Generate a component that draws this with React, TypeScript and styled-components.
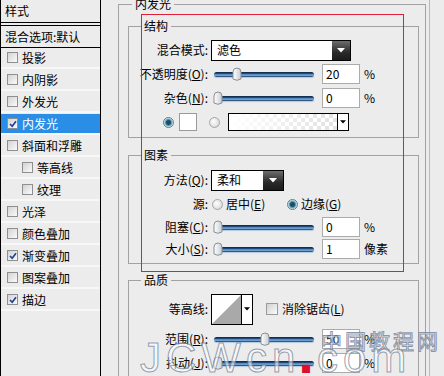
import React from "react";
import styled, { createGlobalStyle } from "styled-components";

const GlobalStyle = createGlobalStyle`
  html, body {
    margin: 0;
    padding: 0;
    background: #ececec;
  }
  body {
    font-family: "Noto Sans CJK SC", "Liberation Sans", sans-serif;
    font-size: 12px;
    line-height: 16px;
    color: #000;
  }
`;

const Window = styled.div`
  position: relative;
  display: flex;
  width: 444px;
  height: 376px;
  overflow: hidden;
  background: #ececec;
`;

/* ---------- left style list ---------- */

const StyleList = styled.div`
  width: 101px;
  flex: none;
  box-sizing: border-box;
  border-left: 1px solid #000;
  border-right: 1px solid #000;
  display: flex;
  flex-direction: column;
`;

const ListHeader = styled.div`
  height: 22px;
  border-bottom: 1px solid #000;
  padding-left: 4px;
  display: flex;
  align-items: center;
`;

const BlendRow = styled.div`
  margin-top: 2px;
  height: 21px;
  border-top: 1px solid #000;
  border-bottom: 1px solid #000;
  padding-left: 4px;
  display: flex;
  align-items: center;
  white-space: nowrap;
`;

const ListItem = styled.div<{ $active?: boolean; $indent?: boolean }>`
  height: 19px;
  margin-bottom: 3px;
  display: flex;
  align-items: center;
  gap: 4px;
  padding-left: ${(p) => (p.$indent ? 21 : 6)}px;
  background: ${(p) => (p.$active ? "#2a8ee6" : "transparent")};
  color: ${(p) => (p.$active ? "#fff" : "#000")};
  box-shadow: 0 2px 0 #f7f7f7;
  white-space: nowrap;
`;

const Check = styled.span`
  width: 9px;
  height: 9px;
  flex: none;
  border: 1px solid #8f8f8f;
  background: linear-gradient(135deg, #d2d2d2, #fbfbfb);
  display: inline-flex;
  align-items: center;
  justify-content: center;
`;

const BigCheck = styled(Check)`
  width: 10px;
  height: 10px;
  margin-left: 13px;
  border-color: #9a9a9a;
`;

const CheckMark = () => (
  <svg width="8" height="8" viewBox="0 0 8 8">
    <path d="M1 4 L3.2 6.3 L7 1.2" stroke="#22409a" strokeWidth="1.7" fill="none" />
  </svg>
);

/* ---------- main panel ---------- */

const Main = styled.div`
  width: 329px;
  flex: none;
  box-sizing: border-box;
  padding-left: 17px;
  border-right: 1px solid #b9b9b9;
`;

const OuterGroup = styled.fieldset`
  margin: -4px 0 0 0;
  width: 308px;
  box-sizing: border-box;
  padding: 3px 6px 0 9px;
  border: 1px solid #a2a2a2;
  border-bottom: none;
  min-width: 0;
`;

const Group = styled.fieldset<{ $mt: number; $pt: number; $pb: number }>`
  margin: ${(p) => p.$mt}px 0 0 0;
  padding: ${(p) => p.$pt}px 0 ${(p) => p.$pb}px 0;
  border: 1px solid #a2a2a2;
  min-width: 0;
`;

const Legend = styled.legend<{ $offset: number }>`
  padding: 0 3px;
  margin-left: ${(p) => p.$offset}px;
  height: 16px;
  line-height: 16px;
`;

const Row = styled.div<{ $h: number; $pl?: number }>`
  height: ${(p) => p.$h}px;
  padding-left: ${(p) => p.$pl ?? 0}px;
  display: flex;
  align-items: center;
  white-space: nowrap;
`;

const FieldLabel = styled.span`
  width: 79px;
  flex: none;
  display: flex;
  justify-content: flex-end;
  white-space: nowrap;
`;

const Select = styled.div<{ $w: number }>`
  margin-left: 3px;
  width: ${(p) => p.$w}px;
  height: 21px;
  flex: none;
  box-sizing: border-box;
  border: 1px solid #000;
  background: #fff;
  display: flex;
  align-items: stretch;
`;

const SelectValue = styled.span`
  flex: 1;
  padding-left: 5px;
  display: flex;
  align-items: center;
`;

const DropButton = styled.span<{ $w: number }>`
  width: ${(p) => p.$w}px;
  flex: none;
  background: linear-gradient(#6d6d6d, #2a2a2a 60%, #1c1c1c);
  display: flex;
  align-items: center;
  justify-content: center;
`;

const SliderBox = styled.div`
  position: relative;
  margin-left: 6px;
  width: 100px;
  height: 14px;
  flex: none;
`;

const Track = styled.div`
  position: absolute;
  left: 0;
  right: 0;
  top: 5px;
  height: 5px;
  border-radius: 3px;
  background: linear-gradient(#0d2140 0%, #24568f 40%, #8cc1ee 60%, #16355f 100%);
  box-shadow: 0 1px 1px rgba(120, 170, 220, 0.5);
`;

const ThumbSvg = styled.svg`
  position: absolute;
  top: 0;
`;

const NumberBox = styled.div`
  margin-left: 8px;
  width: 38px;
  height: 20px;
  flex: none;
  box-sizing: border-box;
  border: 1px solid #ababab;
  background: #fff;
  padding-left: 3px;
  display: flex;
  align-items: center;
`;

const Unit = styled.span`
  margin-left: 4px;
`;

const Radio = styled.span<{ $on?: boolean; $ml?: number }>`
  width: 11px;
  height: 11px;
  flex: none;
  margin-left: ${(p) => p.$ml ?? 0}px;
  border-radius: 50%;
  box-sizing: border-box;
  border: 1px solid ${(p) => (p.$on ? "#5a7f92" : "#a6a6a6")};
  background: ${(p) =>
    p.$on
      ? "radial-gradient(circle, #1f4d63 0 2px, #4f9ab5 3px, #d6e9f0 4.5px)"
      : "radial-gradient(circle at 40% 40%, #ffffff, #cfcfcf)"};
`;

const RadioOption = styled.span<{ $w: number; $ml?: number }>`
  width: ${(p) => p.$w}px;
  margin-left: ${(p) => p.$ml ?? 0}px;
  flex: none;
  display: flex;
  align-items: center;
  gap: 3px;
`;

const Swatch = styled.span`
  margin-left: 5px;
  width: 18px;
  height: 18px;
  flex: none;
  box-sizing: border-box;
  border: 1px solid #9a9a9a;
  background: #fff;
`;

const GradientPicker = styled.div`
  margin-left: 8px;
  width: 121px;
  height: 18px;
  flex: none;
  box-sizing: border-box;
  border: 1px solid #000;
  display: flex;
`;

const GradientFill = styled.span`
  flex: 1;
  background: linear-gradient(to right, #fff 0%, rgba(255, 255, 255, 0) 90%),
    conic-gradient(#e4e4e4 25%, #fff 0 50%, #e4e4e4 0 75%, #fff 0) 0 0 / 8px 8px;
`;

const SmallArrow = styled.span`
  width: 10px;
  flex: none;
  border-left: 1px solid #000;
  background: #fff;
  display: flex;
  align-items: center;
  justify-content: center;
`;

const ContourBox = styled.div`
  margin-left: 3px;
  width: 42px;
  height: 31px;
  flex: none;
  box-sizing: border-box;
  border: 1px solid #000;
  display: flex;
  background: #fff;
`;

const ContourPreview = styled.svg`
  flex: none;
`;

const CheckText = styled.span`
  margin-left: 4px;
`;

/* ---------- overlays ---------- */

const Annotation = styled.div`
  position: absolute;
  z-index: 2;
  left: 141px;
  top: 14px;
  width: 261px;
  height: 256px;
  border: 1px solid #e0203a;
  pointer-events: none;
`;

const WatermarkCn = styled.div`
  position: absolute;
  z-index: 3;
  left: 321px;
  top: 329px;
  font-size: 21px;
  line-height: 22px;
  letter-spacing: 3px;
  color: rgba(255, 255, 255, 0.6);
  -webkit-text-stroke: 1px rgba(105, 120, 145, 0.75);
`;

const WatermarkEn = styled.div`
  position: absolute;
  z-index: 3;
  left: 140px;
  top: 335px;
  font-family: "Liberation Sans", sans-serif;
  font-size: 42px;
  line-height: 46px;
  letter-spacing: 5px;
  color: rgba(255, 255, 255, 0.55);
  -webkit-text-stroke: 1px rgba(105, 120, 145, 0.7);
  > b {
    color: #e0102a;
    -webkit-text-stroke: 2px #e0102a;
  }
`;

const DownTriangle = ({ color, w = 8 }: { color: string; w?: number }) => (
  <svg width={w} height={w / 2 + 1} viewBox="0 0 8 5">
    <polygon points="0,0 8,0 4,4.5" fill={color} />
  </svg>
);

const Slider = ({ value }: { value: number }) => (
  <SliderBox>
    <Track />
    <ThumbSvg
      width="10"
      height="14"
      viewBox="0 0 10 14"
      style={{ left: -1 + value * 0.93 }}
    >
      <defs>
        <linearGradient id="th" x1="0" x2="1">
          <stop offset="0" stopColor="#ffffff" />
          <stop offset="1" stopColor="#c9cdd2" />
        </linearGradient>
      </defs>
      <path
        d="M1 5 Q1 1 5 1 Q9 1 9 5 L9 12 L5 13.3 L1 12 Z"
        fill="url(#th)"
        stroke="#8a8f96"
        strokeWidth="1"
      />
    </ThumbSvg>
  </SliderBox>
);

const items = [
  { label: "投影" },
  { label: "内阴影" },
  { label: "外发光" },
  { label: "内发光", checked: true, active: true },
  { label: "斜面和浮雕" },
  { label: "等高线", indent: true },
  { label: "纹理", indent: true },
  { label: "光泽" },
  { label: "颜色叠加" },
  { label: "渐变叠加", checked: true },
  { label: "图案叠加" },
  { label: "描边", checked: true },
];

export default function App() {
  return (
    <>
      <GlobalStyle />
      <Window>
        <StyleList>
          <ListHeader>样式</ListHeader>
          <BlendRow>混合选项:默认</BlendRow>
          {items.map((it) => (
            <ListItem key={it.label} $active={it.active} $indent={it.indent}>
              <Check>{it.checked && <CheckMark />}</Check>
              {it.label}
            </ListItem>
          ))}
        </StyleList>

        <Main>
          <OuterGroup>
            <Legend $offset={4}>内发光</Legend>

            <Group $mt={3} $pt={4} $pb={3}>
              <Legend $offset={12}>结构</Legend>
              <Row $h={24}>
                <FieldLabel>混合模式:</FieldLabel>
                <Select $w={140}>
                  <SelectValue>滤色</SelectValue>
                  <DropButton $w={18}>
                    <DownTriangle color="#fff" />
                  </DropButton>
                </Select>
              </Row>
              <Row $h={24}>
                <FieldLabel>
                  不透明度(<u>O</u>):
                </FieldLabel>
                <Slider value={20} />
                <NumberBox>20</NumberBox>
                <Unit>%</Unit>
              </Row>
              <Row $h={24}>
                <FieldLabel>
                  杂色(<u>N</u>):
                </FieldLabel>
                <Slider value={0} />
                <NumberBox>0</NumberBox>
                <Unit>%</Unit>
              </Row>
              <Row $h={24} $pl={34}>
                <Radio $on />
                <Swatch />
                <Radio $ml={12} />
                <GradientPicker>
                  <GradientFill />
                  <SmallArrow>
                    <DownTriangle color="#000" w={6} />
                  </SmallArrow>
                </GradientPicker>
              </Row>
            </Group>

            <Group $mt={9} $pt={5} $pb={3}>
              <Legend $offset={12}>图素</Legend>
              <Row $h={24}>
                <FieldLabel>
                  方法(<u>Q</u>):
                </FieldLabel>
                <Select $w={73}>
                  <SelectValue>柔和</SelectValue>
                  <DropButton $w={20}>
                    <DownTriangle color="#fff" />
                  </DropButton>
                </Select>
              </Row>
              <Row $h={24}>
                <FieldLabel>源:</FieldLabel>
                <RadioOption $w={75} $ml={4}>
                  <Radio />
                  <span>
                    居中(<u>E</u>)
                  </span>
                </RadioOption>
                <RadioOption $w={60}>
                  <Radio $on />
                  <span>
                    边缘(<u>G</u>)
                  </span>
                </RadioOption>
              </Row>
              <Row $h={22}>
                <FieldLabel>
                  阻塞(<u>C</u>):
                </FieldLabel>
                <Slider value={0} />
                <NumberBox>0</NumberBox>
                <Unit>%</Unit>
              </Row>
              <Row $h={22}>
                <FieldLabel>
                  大小(<u>S</u>):
                </FieldLabel>
                <Slider value={0} />
                <NumberBox>1</NumberBox>
                <Unit>像素</Unit>
              </Row>
            </Group>

            <Group $mt={8} $pt={3} $pb={20}>
              <Legend $offset={12}>品质</Legend>
              <Row $h={36}>
                <FieldLabel>等高线:</FieldLabel>
                <ContourBox>
                  <ContourPreview width="29" height="29" viewBox="0 0 29 29">
                    <polygon points="0,29 29,0 29,29" fill="#a9a9a9" />
                  </ContourPreview>
                  <SmallArrow>
                    <DownTriangle color="#000" w={6} />
                  </SmallArrow>
                </ContourBox>
                <BigCheck />
                <CheckText>
                  消除锯齿(<u>L</u>)
                </CheckText>
              </Row>
              <Row $h={24}>
                <FieldLabel>
                  范围(<u>R</u>):
                </FieldLabel>
                <Slider value={50} />
                <NumberBox>50</NumberBox>
                <Unit>%</Unit>
              </Row>
              <Row $h={24}>
                <FieldLabel>
                  抖动(<u>J</u>):
                </FieldLabel>
                <Slider value={0} />
                <NumberBox>0</NumberBox>
                <Unit>%</Unit>
              </Row>
            </Group>
          </OuterGroup>
        </Main>

        <Annotation />
        <WatermarkCn>中国教程网</WatermarkCn>
        <WatermarkEn>
          JCWcn<b>.</b>com
        </WatermarkEn>
      </Window>
    </>
  );
}
